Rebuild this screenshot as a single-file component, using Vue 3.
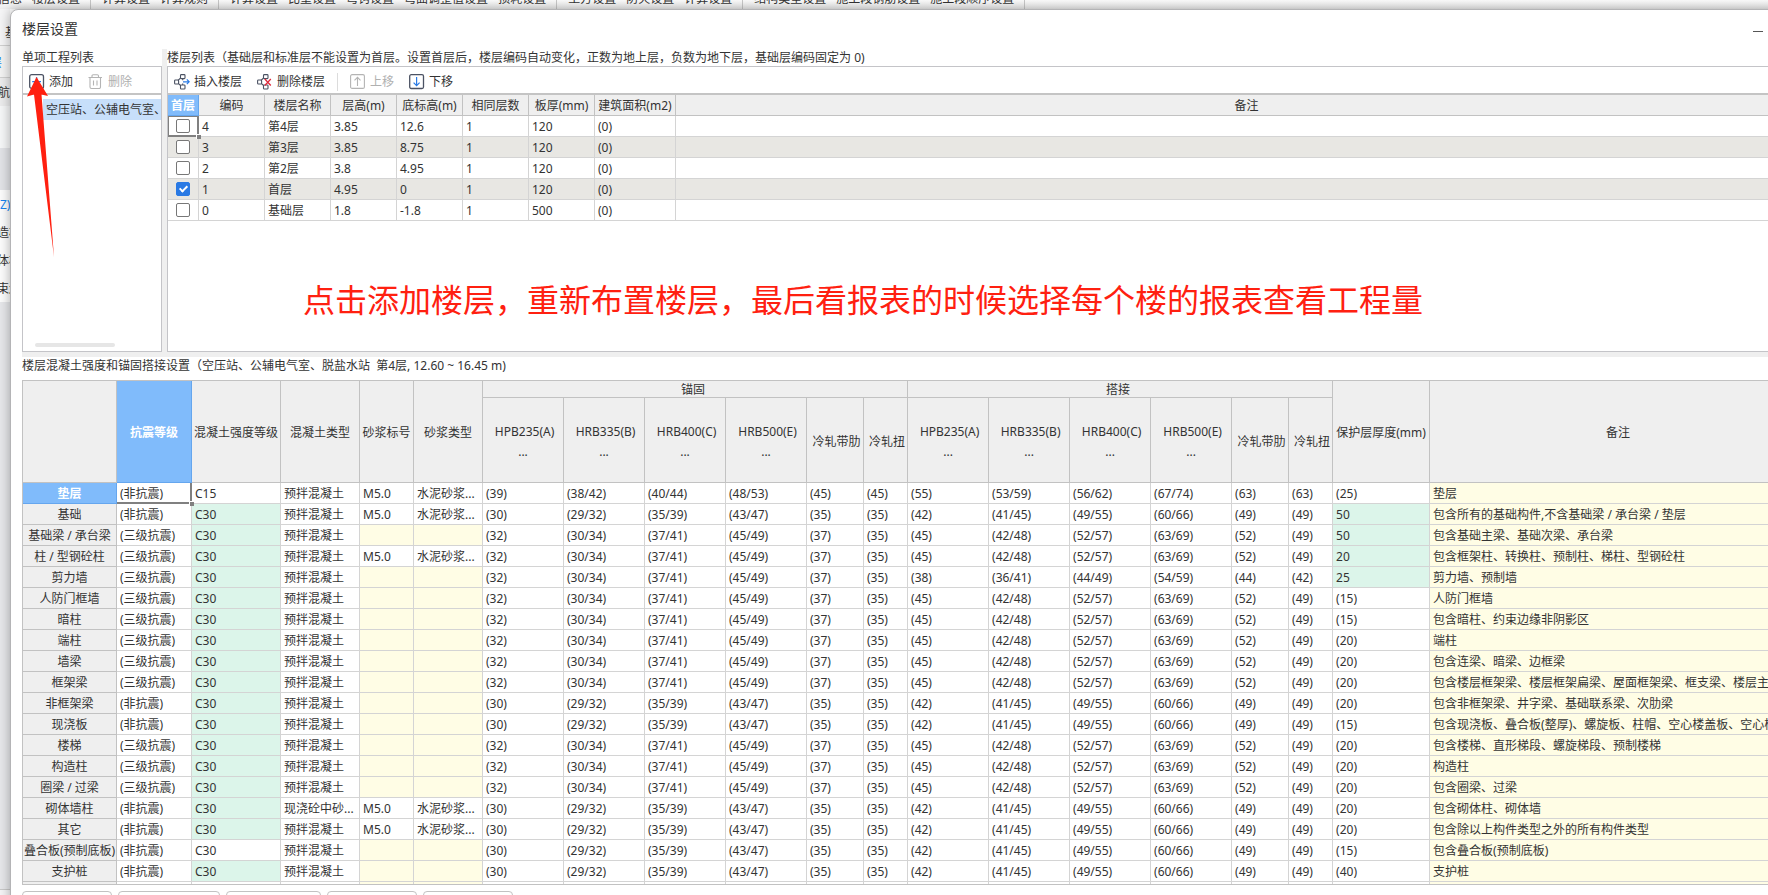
<script setup>
import { ref } from 'vue'

const ribbonGroups = [
  ['工程信息', '楼层设置'],
  ['计算设置', '计算规则'],
  ['计算设置', '比重设置', '弯钩设置', '弯曲调整值设置', '损耗设置'],
  ['土方设置', '防火设置', '计算设置'],
  ['结构类型设置', '施工段钢筋设置', '施工段顺序设置'],
]

const floorHeads = ['首层', '编码', '楼层名称', '层高(m)', '底标高(m)', '相同层数', '板厚(mm)', '建筑面积(m2)', '备注']
const floors = ref([
  { first: false, cells: ['4', '第4层', '3.85', '12.6', '1', '120', '(0)', ''] },
  { first: false, cells: ['3', '第3层', '3.85', '8.75', '1', '120', '(0)', ''] },
  { first: false, cells: ['2', '第2层', '3.8', '4.95', '1', '120', '(0)', ''] },
  { first: true, cells: ['1', '首层', '4.95', '0', '1', '120', '(0)', ''] },
  { first: false, cells: ['0', '基础层', '1.8', '-1.8', '1', '500', '(0)', ''] },
])

const mainHeads = ['', '抗震等级', '混凝土强度等级', '混凝土类型', '砂浆标号', '砂浆类型']
const steel = [' HPB235(A)\n...', ' HRB335(B)\n...', ' HRB400(C)\n...', ' HRB500(E)\n...', ' 冷轧带肋', ' 冷轧扭']
const steelHeads = [...steel, ...steel]

const anchorNone = ['(30)', '(29/32)', '(35/39)', '(43/47)', '(35)', '(35)']
const lapNone = ['(42)', '(41/45)', '(49/55)', '(60/66)', '(49)', '(49)']
const anchorThree = ['(32)', '(30/34)', '(37/41)', '(45/49)', '(37)', '(35)']
const lapThree = ['(45)', '(42/48)', '(52/57)', '(63/69)', '(52)', '(49)']
const NONE = '(非抗震)'
const THREE = '(三级抗震)'

function row(name, grade, cover, note, extra = {}) {
  const none = grade === NONE
  return {
    name,
    grade,
    cover,
    note,
    strength: 'C30',
    custom: true,
    type: '预拌混凝土',
    mortar: false,
    values: none ? [...anchorNone, ...lapNone] : [...anchorThree, ...lapThree],
    ...extra,
  }
}

const members = [
  row('垫层', NONE, '(25)', '垫层', {
    strength: 'C15',
    custom: false,
    mortar: true,
    values: ['(39)', '(38/42)', '(40/44)', '(48/53)', '(45)', '(45)', '(55)', '(53/59)', '(56/62)', '(67/74)', '(63)', '(63)'],
  }),
  row('基础', NONE, '50', '包含所有的基础构件,不含基础梁 / 承台梁 / 垫层', { mortar: true }),
  row('基础梁 / 承台梁', THREE, '50', '包含基础主梁、基础次梁、承台梁'),
  row('柱 / 型钢砼柱', THREE, '20', '包含框架柱、转换柱、预制柱、梯柱、型钢砼柱', { mortar: true }),
  row('剪力墙', THREE, '25', '剪力墙、预制墙', {
    values: [...anchorThree, '(38)', '(36/41)', '(44/49)', '(54/59)', '(44)', '(42)'],
  }),
  row('人防门框墙', THREE, '(15)', '人防门框墙'),
  row('暗柱', THREE, '(15)', '包含暗柱、约束边缘非阴影区'),
  row('端柱', THREE, '(20)', '端柱'),
  row('墙梁', THREE, '(20)', '包含连梁、暗梁、边框梁'),
  row('框架梁', THREE, '(20)', '包含楼层框架梁、楼层框架扁梁、屋面框架梁、框支梁、楼层主肋梁、屋面主肋梁'),
  row('非框架梁', NONE, '(20)', '包含非框架梁、井字梁、基础联系梁、次肋梁'),
  row('现浇板', NONE, '(15)', '包含现浇板、叠合板(整厚)、螺旋板、柱帽、空心楼盖板、空心楼盖柱帽'),
  row('楼梯', THREE, '(20)', '包含楼梯、直形梯段、螺旋梯段、预制楼梯'),
  row('构造柱', THREE, '(20)', '构造柱'),
  row('圈梁 / 过梁', THREE, '(20)', '包含圈梁、过梁'),
  row('砌体墙柱', NONE, '(20)', '包含砌体柱、砌体墙', { type: '现浇砼中砂...', mortar: true }),
  row('其它', NONE, '(20)', '包含除以上构件类型之外的所有构件类型', { mortar: true }),
  row('叠合板(预制底板)', NONE, '(15)', '包含叠合板(预制底板)', { custom: false }),
  row('支护桩', NONE, '(40)', '支护桩'),
]

const footerButtons = ['a', 'b', 'c', 'd', 'e']
</script>

<template>
  <div class="app">
    <nav class="ribbon">
      <template v-for="(group, g) in ribbonGroups" :key="g">
        <a v-for="item in group" :key="item" href="#">{{ item }}</a>
        <i class="ribbon-sep"></i>
      </template>
    </nav>

    <div class="body">
      <aside class="behind">
        <div class="bh-top">基</div>
        <div class="bh-tab">层</div>
        <div class="bh-nav">航</div>
        <div class="bh-light"></div>
        <div class="bh-dark"></div>
        <div class="bh-item blue">Z)</div>
        <div class="bh-item cut">造柱</div>
        <div class="bh-item cut">体柱</div>
        <div class="bh-item cut">束边</div>
        <div class="bh-rest"></div>
        <div class="bh-foot"></div>
      </aside>

      <section class="dialog">
        <header class="title-bar">
          <h1>楼层设置</h1>
          <button class="minimize" type="button" aria-label="最小化"></button>
        </header>

        <div class="upper">
          <div class="pane projects">
            <h2>单项工程列表</h2>
            <div class="panel">
              <div class="toolbar left-bar">
                <button type="button">
                  <svg width="16" height="16" viewBox="0 0 16 16" fill="none">
                    <rect x="0.7" y="0.7" width="13.8" height="13.8" rx="2" stroke="#4b5263" stroke-width="1.3" />
                    <path d="M7.6 3.2v8.8M3.2 7.6h8.8" stroke="#2a7ae4" stroke-width="1.4" />
                  </svg>
                  添加
                </button>
                <button type="button" disabled>
                  <svg width="16" height="16" viewBox="0 0 16 16" fill="none" stroke="#b4b4b4" stroke-width="1.1">
                    <path d="M0.5 3.5h13.5M4 3.5V2a1.2 1.2 0 0 1 1.2-1.3h4A1.2 1.2 0 0 1 10.5 2v1.5M2 3.5V13a1.5 1.5 0 0 0 1.5 1.5h7.5a1.5 1.5 0 0 0 1.5-1.5V3.5M5.5 6.5v5M9 6.5v5" />
                  </svg>
                  删除
                </button>
              </div>
              <div class="tree">
                <div class="tree-item">空压站、公辅电气室、</div>
                <div class="thumb"></div>
              </div>
            </div>
          </div>

          <div class="pane floors">
            <h2>楼层列表（基础层和标准层不能设置为首层。设置首层后，楼层编码自动变化，正数为地上层，负数为地下层，基础层编码固定为 0)</h2>
            <div class="panel">
              <div class="toolbar right-bar">
                <button type="button">
                  <svg width="16" height="16" viewBox="0 0 16 16" fill="none" stroke="#4b5263" stroke-width="1.1">
                    <rect x="0.6" y="6" width="4" height="4" rx="0.8" />
                    <rect x="6.5" y="0.6" width="4.5" height="4" rx="0.8" />
                    <rect x="6.5" y="11" width="4.5" height="4" rx="0.8" />
                    <path d="M4 6.3 6.6 4M4.5 9.6 6.6 11.5M8.700 4.600v1.600M8.700 9.400v1.600" />
                    <path d="M9 7.800h6M12.800 5.400 15.200 7.800l-2.400 2.400" stroke="#2a7ae4" stroke-width="1.2" />
                  </svg>
                  插入楼层
                </button>
                <button type="button">
                  <svg width="16" height="16" viewBox="0 0 16 16" fill="none" stroke="#4b5263" stroke-width="1.1">
                    <rect x="0.6" y="6" width="4" height="4" rx="0.8" />
                    <rect x="6.5" y="0.6" width="4.5" height="4" rx="0.8" />
                    <rect x="6.5" y="11" width="4.5" height="4" rx="0.8" />
                    <path d="M4 6.3 6.6 4M4.5 9.6 6.6 11.5" />
                    <path d="M7.8 5 13.8 11.5M13.8 5 7.8 11.5" stroke="#e02a3c" stroke-width="1.3" />
                  </svg>
                  删除楼层
                </button>
                <i class="bar-sep"></i>
                <button type="button" disabled>
                  <svg width="16" height="16" viewBox="0 0 16 16" fill="none" stroke="#b4b4b4" stroke-width="1.1">
                    <rect x="0.6" y="0.6" width="13.8" height="13.8" rx="1.5" />
                    <path d="M7.5 12V3.5M4.5 6.3l3-3 3 3" />
                  </svg>
                  上移
                </button>
                <button type="button">
                  <svg width="16" height="16" viewBox="0 0 16 16" fill="none">
                    <rect x="0.7" y="0.7" width="13.8" height="13.8" rx="1.5" stroke="#4b5263" stroke-width="1.3" />
                    <path d="M7.6 3v8.5M4.6 8.7l3 3 3-3" stroke="#2a7ae4" stroke-width="1.2" />
                  </svg>
                  下移
                </button>
              </div>
              <table class="grid floor-grid">
                <colgroup>
                  <col class="c31" /><col v-for="n in 6" :key="n" class="c66" /><col class="c81" /><col />
                </colgroup>
                <thead>
                  <tr>
                    <th v-for="(h, i) in floorHeads" :key="h" scope="col" :class="{ active: i === 0 }">{{ h }}</th>
                  </tr>
                </thead>
                <tbody>
                  <tr v-for="(f, r) in floors" :key="r">
                    <td class="check" :class="{ focus: r === 0, boxed: r === 0 }">
                      <input v-model="f.first" type="checkbox" :aria-label="f.cells[1]" />
                    </td>
                    <td v-for="(c, i) in f.cells" :key="i">{{ c }}</td>
                  </tr>
                </tbody>
              </table>
            </div>
          </div>
        </div>

        <div class="splitter"></div>
        <h2 class="lower-title">楼层混凝土强度和锚固搭接设置（空压站、公辅电气室、脱盐水站&nbsp;&nbsp;第4层, 12.60 ~ 16.45 m)</h2>

        <div class="lower">
          <table class="grid member-grid">
            <colgroup>
              <col class="c94" /><col class="c75" /><col class="c89" /><col class="c79" /><col class="c54" /><col class="c69" />
              <template v-for="n in 2" :key="n">
                <col class="c81" /><col class="c81" /><col class="c81" /><col class="c81" /><col class="c57" /><col class="c44" />
              </template>
              <col class="c97" /><col />
            </colgroup>
            <thead>
              <tr class="group-row">
                <th v-for="(h, i) in mainHeads" :key="i" rowspan="2" :class="{ active: i === 1 }">{{ h }}</th>
                <th class="group" colspan="6">锚固</th>
                <th class="group" colspan="6">搭接</th>
                <th rowspan="2">保护层厚度(mm)</th>
                <th rowspan="2">备注</th>
              </tr>
              <tr class="steel-row">
                <th v-for="(h, i) in steelHeads" :key="i" scope="col">{{ h }}</th>
              </tr>
            </thead>
            <tbody>
              <tr v-for="(m, r) in members" :key="m.name">
                <th scope="row" :class="{ active: r === 0 }">{{ m.name }}</th>
                <td :class="{ focus: r === 0 }">{{ m.grade }}</td>
                <td :class="{ green: m.custom }">{{ m.strength }}</td>
                <td>{{ m.type }}</td>
                <td :class="{ yellow: !m.mortar }">{{ m.mortar ? 'M5.0' : '' }}</td>
                <td :class="{ yellow: !m.mortar }">{{ m.mortar ? '水泥砂浆...' : '' }}</td>
                <td v-for="(v, i) in m.values" :key="i">{{ v }}</td>
                <td :class="{ green: !m.cover.startsWith('(') }">{{ m.cover }}</td>
                <td class="yellow">{{ m.note }}</td>
              </tr>
              <tr>
                <th></th>
                <td v-for="n in 19" :key="n" :class="{ yellow: n === 4 || n === 5 || n === 19 }"></td>
              </tr>
            </tbody>
          </table>
        </div>

        <footer>
          <button v-for="(b, i) in footerButtons" :key="b" type="button" :class="'fb-' + b" :aria-label="'操作' + (i + 1)"></button>
        </footer>
      </section>
    </div>

    <svg class="arrow" width="30" height="182" viewBox="0 0 30 182">
      <path d="M10.5 0 22 19 15.5 17.5 28 180 8 17.5 1 19.5Z" fill="#ff2010" />
    </svg>
    <p class="callout">点击添加楼层，重新布置楼层，最后看报表的时候选择每个楼的报表查看工程量</p>
  </div>
</template>

<style>
body {
  margin: 0;
  overflow: hidden;
}
</style>

<style scoped>
.app {
  position: relative;
  display: flex;
  flex-direction: column;
  height: 100vh;
  overflow: hidden;
  background: #fff;
  color: #333;
  font: 12px/16px "Noto Sans", "Noto Sans CJK SC", sans-serif;
}

button {
  font: inherit;
  color: inherit;
  padding: 0;
  margin: 0;
  border: 0;
  background: none;
}

h1,
h2,
p {
  margin: 0;
  font-weight: 400;
}

.ribbon {
  flex: none;
  display: flex;
  align-items: flex-end;
  gap: 10px;
  height: 9px;
  margin-left: -26px;
  background: linear-gradient(#fcfcfc, #ededed);
  white-space: nowrap;
}

.ribbon a {
  color: #333;
  text-decoration: none;
  padding-bottom: 2px;
}

.ribbon-sep {
  width: 1px;
  height: 9px;
  margin-right: 1px;
  background: #c8c8c8;
}

.body {
  flex: 1;
  min-height: 0;
  display: flex;
}

.behind {
  flex: none;
  width: 10px;
  display: flex;
  flex-direction: column;
  overflow: hidden;
  white-space: nowrap;
  background: #f5f5f6;
}

.behind > div {
  flex: none;
  display: flex;
  align-items: center;
  box-sizing: border-box;
  padding-top: 2px;
}

.behind .bh-top {
  height: 37px;
  padding: 12px 0 0 5px;
  border-bottom: 1px solid #d0d0d0;
}

.behind .bh-tab {
  height: 32px;
  color: #1583f0;
  text-indent: -10px;
  border-bottom: 1px solid #d0d0d0;
  background: #f3f3f3;
}

.behind .bh-nav {
  height: 28px;
  text-indent: -2px;
  background: #ececed;
}

.behind .bh-light {
  height: 42px;
  background: #f6f7f8;
}

.behind .bh-dark {
  height: 42px;
  background: #e2e3e7;
}

.behind .bh-item {
  height: 28px;
  background: #fcfcfc;
}

.behind .blue {
  color: #1583f0;
}

.behind .cut {
  text-indent: -3px;
}

.behind .bh-rest {
  flex: 1;
  background: #e6e7ea;
  border-bottom: 1px solid #c8c8c8;
}

.behind .bh-foot {
  height: 5px;
}

.dialog {
  position: relative;
  flex: 1;
  min-width: 0;
  display: flex;
  flex-direction: column;
  box-sizing: border-box;
  margin: 0 -60px -30px 0;
  padding: 0 8px 0 11px;
  background: #fff;
  border: 1px solid #b4b4b6;
  border-radius: 8px;
  box-shadow: 0 0 12px rgba(0, 0, 0, 0.32);
}

.title-bar {
  flex: none;
  display: flex;
  align-items: center;
  justify-content: space-between;
  box-sizing: border-box;
  height: 39px;
  padding: 0 56px 2px 0;
}

.title-bar h1 {
  font-size: 14px;
}

.minimize {
  width: 10px;
  height: 1px;
  margin-top: 5px;
  background: #555;
}

.upper {
  flex: none;
  display: flex;
  gap: 5px;
  height: 303px;
  background: #efefef;
}

.pane {
  display: flex;
  flex-direction: column;
  background: #fff;
}

.projects {
  width: 140px;
}

.floors {
  flex: 1;
  min-width: 0;
}

h2 {
  flex: none;
  font-size: 12px;
  line-height: 17px;
  white-space: nowrap;
}

.panel {
  flex: 1;
  min-height: 0;
  display: flex;
  flex-direction: column;
  border: 1px solid #c4c4c8;
}

.toolbar {
  flex: none;
  display: flex;
  align-items: center;
  gap: 15px;
  height: 26px;
  padding: 4px 0 0 6px;
  box-sizing: border-box;
}

.toolbar + * {
  border-top: 2px solid #c4c4c4;
}

.toolbar button {
  display: flex;
  align-items: center;
  gap: 4px;
}

.toolbar button:disabled {
  color: #b0b0b0;
}

.bar-sep {
  width: 1px;
  height: 18px;
  margin: 0 -3px;
  background: #dcdcdc;
}

.tree {
  flex: 1;
  display: flex;
  flex-direction: column;
  justify-content: space-between;
  padding: 4px 0;
}

.tree-item {
  margin-left: 20px;
  padding-left: 3px;
  line-height: 21px;
  background: #c7dffa;
  white-space: nowrap;
  overflow: hidden;
}

.thumb {
  width: 80px;
  height: 4px;
  margin-left: 12px;
  border-radius: 2px;
  background: #e6e6e6;
}

.grid {
  table-layout: fixed;
  width: 100%;
  border-collapse: separate;
  border-spacing: 0;
}

.grid th,
.grid td {
  box-sizing: border-box;
  height: 21px;
  padding: 2px 0 0;
  line-height: 18px;
  white-space: pre;
}

.grid th {
  font-weight: 400;
  text-align: center;
  background: #efefef;
  border-right: 1px solid #c2c2c2;
  border-bottom: 1px solid #c2c2c2;
}

.grid td {
  padding-left: 3px;
  text-align: left;
  border-right: 1px solid #d4d4d4;
  border-bottom: 1px solid #d4d4d4;
}

.grid th.active {
  color: #fff;
  font-weight: 700;
  background: #80bbfb;
  border-color: #65a6ee;
}

.floor-grid tbody tr:nth-child(even) {
  background: #e8e7e3;
}

.grid td.check {
  padding: 0;
  text-align: center;
}

.check input {
  appearance: none;
  display: block;
  position: relative;
  box-sizing: border-box;
  width: 14px;
  height: 14px;
  margin: 0 auto;
  border: 1px solid #777;
  border-radius: 2px;
  background: #fff;
}

.check input:checked {
  border-color: #2a7ae4;
  background: #2a7ae4;
}

.check input:checked::after {
  content: "";
  position: absolute;
  left: 4px;
  top: 1px;
  width: 3px;
  height: 6px;
  border: solid #fff;
  border-width: 0 2px 2px 0;
  transform: rotate(45deg);
}

.grid td.focus {
  position: relative;
}

.focus::before {
  content: "";
  position: absolute;
  inset: 0 -1px -1px 0;
  border-right: 2px solid #808080;
  border-bottom: 2px solid #808080;
}

.boxed::before {
  border-top: 1px solid #808080;
  border-left: 1px solid #808080;
}

.focus::after {
  content: "";
  position: absolute;
  right: -3px;
  bottom: -3px;
  width: 4px;
  height: 4px;
  background: #808080;
  border: solid #fff;
  border-width: 1px 0 0 1px;
}

.c31 { width: 31px; }
.c44 { width: 44px; }
.c54 { width: 54px; }
.c57 { width: 57px; }
.c66 { width: 66px; }
.c69 { width: 69px; }
.c75 { width: 75px; }
.c79 { width: 79px; }
.c81 { width: 81px; }
.c89 { width: 89px; }
.c94 { width: 94px; }
.c97 { width: 97px; }

.splitter {
  flex: none;
  height: 5px;
  background: #efefef;
}

.lower-title {
  padding-bottom: 6px;
}

.lower {
  flex: 1;
  min-height: 0;
  overflow: hidden;
  padding-right: 11px;
  border: 1px solid #c2c2c2;
}

.member-grid .group-row .group {
  height: 17px;
  padding: 2px 4px 0 0;
  line-height: 14px;
}

.member-grid .steel-row th {
  height: 85px;
  padding-top: 4px;
  line-height: 20px;
}

.green {
  background: #dcf5ea;
}

.yellow {
  background: #fffde5;
}

footer {
  flex: none;
  display: flex;
  gap: 6px;
  padding: 6px 0 9px;
}

footer button {
  width: 90px;
  height: 24px;
  border: 1px solid #c2c2c2;
  border-radius: 4px;
}

footer .fb-b {
  width: 102px;
}

footer .fb-c {
  width: 95px;
}

.arrow {
  position: absolute;
  left: 26px;
  top: 77px;
}

.callout {
  position: absolute;
  left: 303px;
  top: 276px;
  font-size: 32px;
  line-height: 48px;
  color: #ff2010;
  white-space: nowrap;
}
</style>
